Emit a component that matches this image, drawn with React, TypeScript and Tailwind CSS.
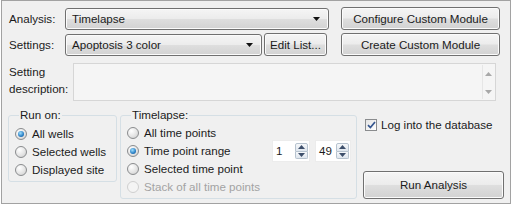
import React from 'react';

const btnBg =
  'border border-[#707070] rounded-[3px] bg-[linear-gradient(to_bottom,#f5f5f5,#ececec_48%,#dedede_52%,#d2d2d2)] shadow-[inset_0_0_0_1px_#fbfbfb]';

function DropArrow() {
  return (
    <svg width="7" height="4" viewBox="0 0 7 4" className="shrink-0">
      <path d="M0 0H7L3.5 4Z" fill="#111" />
    </svg>
  );
}

function Combo({ className, text }: { className: string; text: string }) {
  return (
    <div className={`flex items-center h-[22px] pl-[6px] pr-[8px] ${btnBg} ${className}`}>
      <span className="flex-1">{text}</span>
      <DropArrow />
    </div>
  );
}

function Button({ className, text }: { className: string; text: string }) {
  return (
    <div className={`flex items-center justify-center ${btnBg} ${className}`}>
      <span>{text}</span>
    </div>
  );
}

function Radio({ label, checked, disabled }: { label: string; checked?: boolean; disabled?: boolean }) {
  return (
    <div className="flex items-center h-[18px] gap-[5px]">
      <span
        className={
          disabled
            ? 'w-[12px] h-[12px] rounded-full border border-[#cfcfcf] bg-[#f4f4f4] flex items-center justify-center shrink-0'
            : 'w-[12px] h-[12px] rounded-full border border-[#8a8c8e] bg-[radial-gradient(circle_at_35%_30%,#ffffff,#e2e2e2_60%,#c8c8c8)] flex items-center justify-center shrink-0'
        }
      >
        {checked && (
          <span className="w-[6px] h-[6px] rounded-full bg-[radial-gradient(circle_at_40%_35%,#9fe0ff,#2a7fc4_60%,#0f4f8c)]" />
        )}
      </span>
      <span className={disabled ? 'text-[#a3a3a3] whitespace-nowrap' : 'whitespace-nowrap'}>{label}</span>
    </div>
  );
}

function SpinArrows() {
  return (
    <div className="flex flex-col w-[13px] h-full">
      <div className="flex-1 flex items-center justify-center border border-[#b7c3cf] rounded-t-[2px] bg-[linear-gradient(to_bottom,#f6f8fa,#dfe6ee)]">
        <svg width="7" height="4" viewBox="0 0 7 4">
          <path d="M0 4H7L3.5 0Z" fill="#3d4f6b" />
        </svg>
      </div>
      <div className="flex-1 flex items-center justify-center border border-t-0 border-[#b7c3cf] rounded-b-[2px] bg-[linear-gradient(to_bottom,#f6f8fa,#dfe6ee)]">
        <svg width="7" height="4" viewBox="0 0 7 4">
          <path d="M0 0H7L3.5 4Z" fill="#3d4f6b" />
        </svg>
      </div>
    </div>
  );
}

function Spin({ className, value }: { className: string; value: string }) {
  return (
    <div className={`flex items-stretch h-[22px] bg-white border border-[#ececec] pl-[3px] pr-[1px] py-[2px] ${className}`}>
      <span className="flex-1 flex items-center">{value}</span>
      <SpinArrows />
    </div>
  );
}

function Group({ className, label, children }: { className: string; label: string; children: React.ReactNode }) {
  return (
    <div className={`relative border border-[#d5dfe5] rounded-[3px] ${className}`}>
      <span className="absolute left-[10px] top-[-9px] bg-[#f0f0f0] px-[1px] leading-[16px]">{label}</span>
      {children}
    </div>
  );
}

export default function App() {
  return (
    <div className="w-[513px] h-[206px] bg-white font-['Liberation_Sans',Arial,sans-serif] text-[11.6px] text-[#1b1b1b] leading-none">
      <div className="ml-[1px] w-[510px] h-[204px] border border-[#a2a2a2] bg-[#f0f0f0] pl-[6px] pt-[6px]">
        {/* Row 1 */}
        <div className="flex items-start h-[23px]">
          <div className="w-[57px] pl-[1px] h-[23px] flex items-center">Analysis:</div>
          <Combo className="w-[264px] mt-[1px]" text="Timelapse" />
          <Button className="ml-[12px] w-[159px] h-[23px]" text="Configure Custom Module" />
        </div>
        {/* Row 2 */}
        <div className="flex items-start h-[23px] mt-[3px]">
          <div className="w-[57px] pl-[1px] h-[23px] flex items-center">Settings:</div>
          <Combo className="w-[197px] mt-[1px]" text="Apoptosis 3 color" />
          <Button className="ml-[2px] w-[63px] h-[23px]" text="Edit List..." />
          <Button className="ml-[14px] w-[159px] h-[23px]" text="Create Custom Module" />
        </div>
        {/* Row 3 */}
        <div className="flex items-start mt-[7px]">
          <div className="w-[65px] pl-[1px] leading-[17px]">
            Setting
            <br />
            description:
          </div>
          <div className="flex w-[423px] h-[38px] border border-[#d6d6d6] bg-[#f5f5f5]">
            <div className="flex-1" />
            <div className="w-[12px] mr-[1px] my-[1px] border-l border-[#e6e6e6] flex flex-col items-center justify-between pt-[7px] pb-[5px]">
              <svg width="7" height="4" viewBox="0 0 7 4">
                <path d="M0 4H7L3.5 0Z" fill="#a8a8a8" />
              </svg>
              <svg width="7" height="4" viewBox="0 0 7 4">
                <path d="M0 0H7L3.5 4Z" fill="#a8a8a8" />
              </svg>
            </div>
          </div>
        </div>
        {/* Row 4 */}
        <div className="flex items-start mt-[14px]">
          <Group className="w-[109px] h-[67px] pt-[9px] pl-[6px]" label="Run on:">
            <Radio label="All wells" checked />
            <Radio label="Selected wells" />
            <Radio label="Displayed site" />
          </Group>
          <Group className="ml-[3px] w-[237px] h-[84px] pt-[8px] pl-[6px]" label="Timelapse:">
            <Radio label="All time points" />
            <div className="flex items-center h-[18px]">
              <Radio label="Time point range" checked />
              <div className="ml-auto mr-[5px] flex items-center gap-[5px] my-[-2px]">
                <Spin className="w-[38px]" value="1" />
                <Spin className="w-[36px]" value="49" />
              </div>
            </div>
            <Radio label="Selected time point" />
            <Radio label="Stack of all time points" disabled />
          </Group>
          <div className="ml-[5px] w-[143px] h-[84px] flex flex-col justify-between">
            <div className="flex items-center pl-[3px] pt-[4px] gap-[4px]">
              <span className="w-[12px] h-[12px] border border-[#8a8c8e] bg-[linear-gradient(135deg,#e4e4e4,#ffffff)] flex items-center justify-center shrink-0">
                <svg width="9" height="8" viewBox="0 0 9 8">
                  <path d="M1 4.2L3.4 6.6L8 1" fill="none" stroke="#34558f" strokeWidth="1.7" />
                </svg>
              </span>
              <span className="whitespace-nowrap">Log into the database</span>
            </div>
            <Button className="ml-[1px] w-[141px] h-[28px]" text="Run Analysis" />
          </div>
        </div>
      </div>
    </div>
  );
}
